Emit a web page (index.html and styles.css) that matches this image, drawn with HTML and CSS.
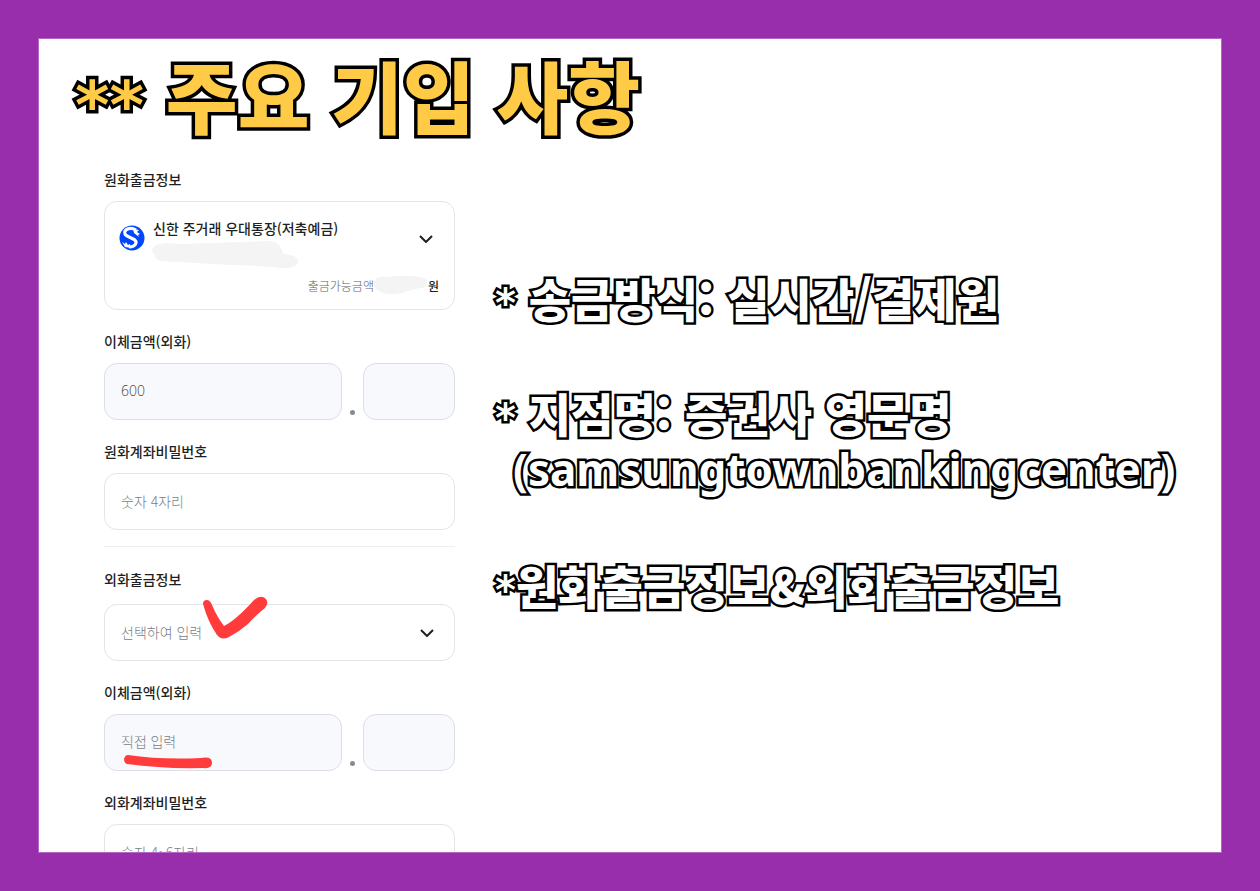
FILE: index.html
```html
<!DOCTYPE html>
<html lang="ko">
<head>
  <meta charset="UTF-8">
  <meta name="viewport" content="width=device-width, initial-scale=1.0">
  <title>주요 기입 사항</title>
  <link rel="stylesheet" href="styles.css">
</head>
<body>
  <main class="panel">
    <h1><span class="star">**</span> 주요 기입 사항</h1>
    <div class="content">
      <form class="form">
        <div class="form-group">
          <label for="wonAccount">원화출금정보</label>
          <div class="account box">
            <svg class="logo" viewBox="0 0 26 26" aria-hidden="true">
              <circle cx="13" cy="13" r="12.5" fill="#0046ff"/>
              <path d="M17 5 C11 1 4 5 6 9 C8 13 18 13 17 18 C16 21 13 22 10 22" fill="none" stroke="#fff" stroke-width="3.2"/>
              <path d="M14 4 L20 5 L18 7 L21 9 L19 10 L20 12 L15 8 Z M3 17 L6 19 L7 17 L9 20 L11 19 L12 23 L6 22 Z" fill="#fff"/>
            </svg>
            <div class="account-name">
              <select id="wonAccount">
                <option>신한 주거래 우대통장(저축예금)</option>
              </select>
              <svg class="mask" viewBox="0 0 148 28" aria-hidden="true">
                <path d="M3 5 Q10 1 30 3 L118 0 Q130 1 132 13 Q147 14 147 21 Q146 28 130 27 Q100 24 80 24 L10 20 Q4 19 4 14 Q-1 10 3 5Z" fill="#f4f4f4"/>
              </svg>
            </div>
            <svg class="chevron" viewBox="0 0 14 8" aria-hidden="true"><path d="M1 1 L7 7 L13 1"/></svg>
            <div class="balance">
              <span>출금가능금액</span>
              <svg class="mask" viewBox="0 0 54 20" aria-hidden="true">
                <path d="M0 6 Q4 0 14 2 Q32 -1 50 3 Q56 6 52 12 Q38 14 28 18 Q12 21 5 16 Q-2 12 0 6Z" fill="#f4f4f4"/>
              </svg>
              <strong>원</strong>
            </div>
          </div>
        </div>
        <div class="form-group">
          <label for="wonAmount">이체금액(외화)</label>
          <div class="amount">
            <input class="box filled" type="text" id="wonAmount" value="600">
            <span class="dot"></span>
            <input class="box filled" type="text" aria-label="소수점 이하 금액">
          </div>
        </div>
        <div class="form-group">
          <label for="wonPassword">원화계좌비밀번호</label>
          <input class="box" type="text" id="wonPassword" placeholder="숫자 4자리">
        </div>
        <hr>
        <div class="form-group foreign">
          <label for="foreignAccount">외화출금정보</label>
          <div class="select-wrap">
            <select class="box" id="foreignAccount">
              <option>선택하여 입력</option>
            </select>
            <svg class="chevron" viewBox="0 0 14 8" aria-hidden="true"><path d="M1 1 L7 7 L13 1"/></svg>
            <svg class="check-mark" viewBox="0 0 66 44" aria-hidden="true">
              <path d="M1 8 Q1 4 5 4 Q8 4 10 9 Q15 21 22 30 Q34 24 52 4 Q59 -2 64 3 Q67 7 63 12 Q55 18 46 28 Q38 35 27 41 Q20 45 15 39 Q6 26 1 8Z" fill="#ff3b3b"/>
            </svg>
          </div>
        </div>
        <div class="form-group">
          <label for="foreignAmount">이체금액(외화)</label>
          <div class="amount">
            <input class="box filled" type="text" id="foreignAmount" placeholder="직접 입력">
            <span class="dot"></span>
            <input class="box filled" type="text" aria-label="소수점 이하 금액">
            <svg class="underline" viewBox="0 0 90 14" aria-hidden="true">
              <path d="M5 0 Q38 5 78 3 Q89 1 89 8 Q89 14 80 13 Q40 14 4 9 Q1 8 1 4 Q2 0 5 0Z" fill="#ff3b3b"/>
            </svg>
          </div>
        </div>
        <div class="form-group">
          <label for="foreignPassword">외화계좌비밀번호</label>
          <input class="box" type="text" id="foreignPassword" placeholder="숫자 4~6자리">
        </div>
      </form>
      <section class="notes">
        <p><span class="star">*</span> 송금방식: 실시간/결제원</p>
        <p><span class="star">*</span> 지점명: 증권사 영문명
          <span class="branch">(samsungtownbankingcenter)</span>
        </p>
        <p><span class="star">*</span>원화출금정보&amp;외화출금정보</p>
      </section>
    </div>
  </main>
</body>
</html>
```

FILE: styles.css
```css
* {
  box-sizing: border-box;
}
body {
  margin: 0;
  padding: 38px;
  background: #992eac;
  color: #1d1f22;
  font-family: "Noto Sans CJK KR", sans-serif;
  font-size: 14px;
}
.panel {
  height: calc(100vh - 76px);
  overflow: hidden;
  background: #fff;
  border: 1px solid #b565c3;
}
h1 {
  margin: 0;
  padding: 0 36px;
  font-size: 78px;
  font-weight: 900;
  line-height: 110px;
  color: #ffcb47;
  -webkit-text-stroke: 7px #000;
  paint-order: stroke fill;
}
.star {
  font-family: "DejaVu Sans", sans-serif;
  font-size: 66px;
  line-height: 1;
}
.content {
  display: flex;
  gap: 40px;
  padding: 21px 36px 0 65px;
}
.form {
  flex: none;
  width: 351px;
}
.form-group {
  margin-bottom: 22px;
}
.form-group label {
  display: block;
  margin-bottom: 13px;
  font-weight: 500;
  line-height: 18px;
}
.box {
  display: block;
  width: 100%;
  height: 57px;
  padding: 0 16px 2px;
  border: 1px solid #e1e4e8;
  border-radius: 13px;
  background: #fff;
  color: #44484d;
  font-family: inherit;
  font-size: 14px;
  font-weight: 300;
}
.box::placeholder {
  color: #7a8087;
  opacity: 1;
}
.filled {
  background: #f8f9fd;
  border-color: #dcdfe5;
  font-family: "Open Sans", "Noto Sans CJK KR", sans-serif;
}
select {
  appearance: none;
}
.account {
  display: grid;
  grid-template-columns: 26px 1fr 14px;
  column-gap: 6px;
  align-content: start;
  height: 109px;
  padding: 15px 15px 0 14px;
}
.logo {
  width: 26px;
  height: 26px;
  margin-top: 8px;
}
.account-name select {
  display: block;
  width: 100%;
  height: 24px;
  padding: 0 0 2px 2px;
  border: 0;
  background: none;
  color: #1d1f22;
  font-family: inherit;
  font-size: 14px;
  font-weight: 500;
}
.account-name .mask {
  display: block;
  width: 148px;
  height: 28px;
}
.chevron {
  width: 14px;
  height: 8px;
  fill: none;
  stroke: #1d1f22;
  stroke-width: 2;
}
.account .chevron {
  margin: 18px 0 0 -6px;
}
.balance {
  grid-column: 1 / -1;
  display: flex;
  justify-content: flex-end;
  align-items: center;
  height: 20px;
  margin-top: 6px;
  color: #5d6268;
  font-size: 12px;
  font-weight: 300;
}
.balance .mask {
  width: 54px;
  height: 20px;
}
.balance strong {
  color: #1d1f22;
  font-weight: 500;
}
.amount {
  position: relative;
  display: grid;
  grid-template-columns: 238px 1fr 92px;
  align-items: end;
}
.dot {
  width: 5px;
  height: 5px;
  margin-bottom: 5px;
  border-radius: 50%;
  background: #858b92;
  justify-self: center;
}
hr {
  height: 1px;
  margin: -6px 0 23px;
  border: 0;
  background: #eef1f3;
}
.foreign label {
  margin-bottom: 16px;
}
.select-wrap {
  position: relative;
}
.select-wrap select {
  color: #7a8087;
}
.select-wrap .chevron {
  position: absolute;
  top: 25px;
  right: 21px;
  pointer-events: none;
}
.check-mark {
  position: absolute;
  top: -8px;
  left: 98px;
  width: 66px;
  height: 44px;
  pointer-events: none;
}
.underline {
  position: absolute;
  top: 41px;
  left: 19px;
  width: 90px;
  height: 14px;
  pointer-events: none;
}
.notes {
  flex: 1;
  padding-top: 99px;
  color: #fff;
  font-size: 46px;
  font-weight: 900;
  line-height: 57px;
  white-space: nowrap;
  -webkit-text-stroke: 5px #000;
  paint-order: stroke fill;
}
.notes .star {
  font-size: 40px;
}
.notes p {
  margin: 0 0 58px;
}
.branch {
  display: block;
  padding-left: 18px;
  font-family: "Noto Sans", sans-serif;
  font-size: 44px;
  font-weight: 700;
}
```
